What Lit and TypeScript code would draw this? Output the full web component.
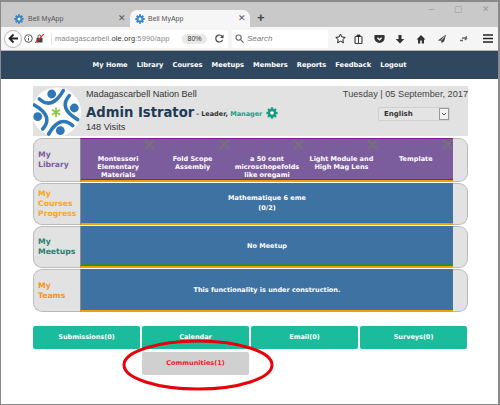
import { LitElement, html, css, svg } from "lit";
import { customElement } from "lit/decorators.js";

const gear = (c: string, s: number) => svg`<svg class="ic" width=${s} height=${s} viewBox="0 0 16 16"><g fill=${c}><circle cx="8" cy="8" r="5.4"/><rect x="6.4" y="0.5" width="3.2" height="15" /><rect x="0.5" y="6.4" width="15" height="3.2"/><rect x="6.4" y="0.5" width="3.2" height="15" transform="rotate(45 8 8)"/><rect x="6.4" y="0.5" width="3.2" height="15" transform="rotate(-45 8 8)"/></g><circle cx="8" cy="8" r="2.4" fill="#fff"/></svg>`;

const person = svg`<circle cx="-4.3" cy="-18.3" r="4.4" fill="#2f78b7"/><path d="M-16.7 -13.3Q-4 -2 7.3 -21.7" fill="none" stroke="#2f78b7" stroke-width="3.6" stroke-linecap="round"/>`;

@customElement("app-root")
export class AppRoot extends LitElement {
  static styles = css`
    :host { display: block; width: 500px; height: 405px; overflow: hidden; background: #fff; font-family: "Liberation Sans", Arial, sans-serif; position: relative; box-sizing: border-box; border: 1px solid #8a8a8a; border-width: 2px 2px 1px 1px; }
    .tabs { height: 25px; background: #c9c9c9; display: flex; align-items: flex-end; padding-left: 2px; }
    .tab { width: 127px; height: 17px; display: flex; align-items: center; gap: 4px; padding-left: 11px; box-sizing: border-box; font-size: 7px; color: #555; position: relative; }
    .tab span { display: flex; }
    .tab.on { background: #f6f6f6; border-radius: 7px 7px 0 0; width: 120px; padding-left: 5px; gap: 3px; }
    .tab .c { position: absolute; right: 4px; top: 3px; font-size: 9px; color: #555; line-height: 11px; }
    .plus { font-size: 13px; color: #444; margin: 0 0 2px 7px; line-height: 15px; font-weight: bold; }
    .winbtns { margin-left: auto; display: flex; align-self: flex-start; padding-top: 1px; margin-right: -1px; color: #9a9a9a; font-size: 9px; line-height: 12px; }
    .winbtns span { width: 27px; text-align: center; }
    .bar { height: 23px; background: #f5f5f5; border-bottom: 1px solid #b5b5b5; display: flex; align-items: center; padding-left: 3px; }
    .back { width: 18px; height: 18px; border-radius: 50%; border: 1px solid #bbb; background: #fff; display: flex; align-items: center; justify-content: center; box-sizing: border-box; flex: none; position: relative; z-index: 1; }
    .url { width: 207px; height: 18px; margin-left: -1px; background: #fff; display: flex; align-items: center; font-size: 7.5px; color: #888; padding-left: 3px; box-sizing: border-box; gap: 2px; flex: none; }
    .url b { font-weight: normal; color: #333; }
    .path { width: 122px; margin-left: 5px; padding-left: 3px; border-left: 1px solid #e4e4e4; white-space: nowrap; overflow: hidden; letter-spacing: .1px; line-height: 12px; }
    .zoom { background: #e8e8e8; border-radius: 6px; width: 25px; text-align: center; font-size: 7px; color: #333; line-height: 10px; margin-left: 3px; flex: none; }
    .rel { margin-left: 6px; }
    .search { width: 96px; height: 18px; margin-left: 4px; background: #fff; font-size: 8px; font-style: italic; color: #777; display: flex; align-items: center; gap: 3px; padding-left: 3px; box-sizing: border-box; flex: none; }
    .tools { display: flex; align-items: center; margin-left: 7px; }
    .tools svg { display: block; flex: none; }
    .tools svg:nth-child(2) { margin-left: 8px; }
    .tools svg:nth-child(3) { margin-left: 11px; }
    .tools svg:nth-child(4) { margin-left: 10px; }
    .tools svg:nth-child(5) { margin-left: 11px; }
    .tools svg:nth-child(6) { margin-left: 11px; }
    .tools svg:nth-child(7) { margin-left: 12px; }
    .tools svg:nth-child(8) { margin-left: 14px; }
    .nav { height: 28px; background: #2f4860; display: flex; justify-content: center; align-items: center; gap: 9px; font: bold 6.7px "DejaVu Sans", Verdana, sans-serif; color: #fff; }
    .page { padding: 7px 30px 0 32px; }
    .head { height: 50px; background: #e2e2e2; display: flex; position: relative; overflow: hidden; }
    .logo { width: 50px; height: 50px; flex: none; display: block; }
    .who { padding: 3px 0 0 3px; flex: 1; color: #333; font-size: 9.1px; line-height: 11px; }
    .nm { display: flex; align-items: center; gap: 2px; margin: 4px 0 1px; height: 17px; white-space: nowrap; }
    .nm strong { font: bold 13.2px "DejaVu Sans", Verdana, sans-serif; color: #1f3a56; }
    .nm span { font: bold 6.5px "DejaVu Sans", Verdana, sans-serif; color: #333; padding-top: 2px; }
    .nm em { font-style: normal; color: #17a085; }
    .nm svg { margin-left: 2px; }
    .right { display: flex; flex-direction: column; align-items: flex-end; padding-top: 3px; font-size: 9.2px; color: #444; line-height: 11px; }
    .sel { width: 72px; height: 14px; margin: 7px 18px 0 0; border: 1px solid #d0d0d0; border-radius: 2px; background: #e4e4e4; display: flex; justify-content: space-between; align-items: center; box-sizing: border-box; font: bold 7px "DejaVu Sans", sans-serif; color: #333; padding-left: 5px; }
    .sel i { width: 10px; height: 12px; background: #f2f2f2; border: 1px solid #999; box-sizing: border-box; display: flex; align-items: center; justify-content: center; }
    .rows { margin-top: 2px; display: flex; flex-direction: column; gap: 1px; }
    .row { display: flex; height: 42px; }
    .row.r1 { height: 44px; }
    .row.r4 { height: 43px; }
    .lab { width: 47px; flex: none; box-sizing: border-box; background: #e2e2e2; border: 1px solid #bbb; border-right: 0; border-radius: 9px 0 0 9px; padding-left: 4px; font: bold 7.7px/10px "DejaVu Sans", Verdana, sans-serif; display: flex; align-items: center; }
    .panel { flex: 1; min-width: 0; background: #3e72a2; border-left: 1px solid #8c8c8c; border-bottom: 2px solid #f2a000; display: flex; align-items: center; justify-content: center; text-align: center; color: #fff; font: bold 6.5px/10px "DejaVu Sans", Verdana, sans-serif; }
    .end { width: 15px; flex: none; box-sizing: border-box; background: #e2e2e2; border: 1px solid #bbb; border-left: 0; border-radius: 0 9px 9px 0; }
    .lib { background: #7b5d9d; border-top: 1px solid #8b1a8e; display: grid; grid-template-columns: repeat(5, minmax(0, 1fr)); align-items: start; box-sizing: border-box; position: relative; box-shadow: inset 0 -1px 0 #8b1a8e; padding-top: 16px; }
    .lib div { line-height: 8px; position: relative; }
    .x { position: absolute; left: 50%; top: -16px; margin-left: 26px; }
    .green { box-shadow: inset 0 -2px 0 #2d8a3e; }
    .btns { display: grid; grid-template-columns: repeat(4, 107px); gap: 3px 2px; margin-top: 14px; }
    .btn { height: 23px; background: #1abc9c; border-radius: 2px; color: #fff; display: flex; align-items: center; justify-content: center; padding-bottom: 2px; box-sizing: border-box; font: bold 6.5px "DejaVu Sans", Verdana, sans-serif; }
    .btn.g { background: #d0d0d0; color: #ee1c25; grid-column: 2; }
    .ring { position: absolute; left: 120px; top: 336px; display: block; }
  `;

  render() {
    const ic = () => html`<span>${gear("#3d86c6", 10)}</span>`;
    const row = (l: string, c: string, body: unknown, cls = "") =>
      html`<div class="row ${cls}"><div class="lab" style="color:${c}">${l}</div>${body}<div class="end"></div></div>`;
    return html`
      <div class="tabs">
        <div class="tab">${ic()}<span>Bell MyApp</span><span class="c">✕</span></div>
        <div class="tab on">${ic()}<span>Bell MyApp</span><span class="c">✕</span></div>
        <span class="plus">+</span>
        <div class="winbtns"><span>–</span><span>▢</span><span>✕</span></div>
      </div>
      <div class="bar">
        <div class="back"><svg width="11" height="11" viewBox="0 0 11 11"><path d="M10 5.5H2M5.5 1.5l-4 4 4 4" fill="none" stroke="#222" stroke-width="1.8"/></svg></div>
        <div class="url">
          <svg width="9" height="9" viewBox="0 0 9 9"><circle cx="4.5" cy="4.5" r="3.8" fill="none" stroke="#555"/><path d="M4.5 4v2.6M4.5 2.2v1" stroke="#555"/></svg>
          <svg width="9" height="9" viewBox="0 0 9 9"><rect x="1.5" y="4" width="6" height="4.5" fill="#444"/><path d="M3 4V2.5a1.5 1.5 0 013 0V4" fill="none" stroke="#444"/><path d="M0 9L9 0" stroke="#e22" stroke-width="1.2"/></svg>
          <span class="path">madagascarbell.<b>ole.org</b>:5990/app</span>
          <span class="zoom">80%</span>
          <svg class="rel" width="9" height="9" viewBox="0 0 9 9"><path d="M7.6 3.2A3.5 3.5 0 104.5 8a3.5 3.5 0 003.2-2.2" fill="none" stroke="#444" stroke-width="1.1"/><path d="M8.5 0.5v3.4H5z" fill="#444"/></svg>
        </div>
        <div class="search">
          <svg width="9" height="9" viewBox="0 0 9 9"><circle cx="3.6" cy="3.6" r="2.6" fill="none" stroke="#666" stroke-width="1.1"/><path d="M5.6 5.6l3 3" stroke="#666" stroke-width="1.2"/></svg>
          <span>Search</span>
        </div>
        <div class="tools">
          <svg width="11" height="11" viewBox="0 0 11 11"><path d="M5.5 1l1.4 3 3.3.4-2.4 2.2.6 3.2-2.9-1.6-2.9 1.6.6-3.2L.8 4.4 4.1 4z" fill="#fff" stroke="#222"/></svg>
          <svg width="9" height="10" viewBox="0 0 9 10"><rect x="1" y="2.5" width="7" height="7" rx="1" fill="none" stroke="#444" stroke-width="1.2"/><path d="M3 2.5V1h3v1.5M4.5 3v6" stroke="#444"/></svg>
          <svg width="11" height="10" viewBox="0 0 11 10"><path d="M1 1h9a.6.6 0 01.6.6V4a5 5 0 01-10.2 0V1.6A.6.6 0 011 1z" fill="#333"/><path d="M3.4 3.8l2.1 2 2.1-2" stroke="#fff" stroke-width="1.2" fill="none"/></svg>
          <svg width="10" height="10" viewBox="0 0 10 10"><path d="M3.5 1h3v4h2.800L5 9.5.7 5h2.800z" fill="#333"/></svg>
          <svg width="10" height="10" viewBox="0 0 10 10"><path d="M5 1L.5 5.5H2V9.5h2.200V6.600h1.600v2.900H8V5.500h1.500z" fill="#333"/></svg>
          <svg width="10" height="10" viewBox="0 0 10 10"><path d="M9 .5L.8 6.500l3 .3L5 9.500l1-2L7 8z" fill="#444"/><path d="M7.500 2.500L4 6.500" stroke="#f5f5f5" stroke-width=".8"/></svg>
          <svg width="10" height="10" viewBox="0 0 10 10"><path d="M1 6.500h3M3 4h3l2-1.500M6 6l2-2" stroke="#666" stroke-width="1.500" fill="none"/></svg>
          <svg width="10" height="9" viewBox="0 0 10 9"><path d="M0 1h10M0 4.500h10M0 8h10" stroke="#222" stroke-width="1.400"/></svg>
        </div>
      </div>
      <div class="nav"><span>My Home</span><span>Library</span><span>Courses</span><span>Meetups</span><span>Members</span><span>Reports</span><span>Feedback</span><span>Logout</span></div>
      <div class="page">
        <div class="head">
          <svg class="logo" viewBox="0 0 50 50">
            <circle cx="23.500" cy="26" r="24.500" fill="#fff"/>
            <g transform="translate(23 26.300)">
              <g>${person}</g><g transform="rotate(90)">${person}</g><g transform="rotate(180)">${person}</g><g transform="rotate(270)">${person}</g>
            </g>
            <g stroke="#8cc63f" stroke-width="1.600" transform="translate(-1 1.300)"><path d="M24 20v10M20 22.500l8 5M28 22.500l-8 5"/></g>
          </svg>
          <div class="who">
            <div>Madagascarbell Nation Bell</div>
            <div class="nm"><strong>Admin Istrator</strong><span>- Leader, <em>Manager</em></span>${gear("#17997f", 12)}</div>
            <div>148 Visits</div>
          </div>
          <div class="right">
            <div>Tuesday | 05 September, 2017</div>
            <div class="sel"><span>English</span><i><svg width="6" height="5" viewBox="0 0 6 5"><path d="M1 1l2 2 2-2" fill="none" stroke="#555"/></svg></i></div>
          </div>
        </div>
        <div class="rows">
          ${row("My Library", "#7b5d9d", html`<div class="panel lib">
              <div>${this.xm()}Montessori<br>Elementary<br>Materials</div>
              <div>${this.xm()}Fold Scope<br>Assembly</div>
              <div>${this.xm()}a 50 cent<br>microschopefolds<br>like oregami</div>
              <div>${this.xm()}Light Module and<br>High Mag Lens</div>
              <div>${this.xm()}Template</div>
            </div>`, "r1")}
          ${row("My Courses Progress", "#f5a81c", html`<div class="panel"><div>Mathematique 6 eme<br>(0/2)</div></div>`)}
          ${row("My Meetups", "#2a7f6e", html`<div class="panel green">No Meetup</div>`)}
          ${row("My Teams", "#f7941d", html`<div class="panel">This functionality is under construction.</div>`, "r4")}
        </div>
        <div class="btns">
          <div class="btn">Submissions(0)</div><div class="btn">Calendar</div><div class="btn">Email(0)</div><div class="btn">Surveys(0)</div>
          <div class="btn g">Communities(1)</div>
        </div>
      </div>
      <svg class="ring" width="154" height="54" viewBox="0 0 154 54"><ellipse cx="77" cy="27" rx="74" ry="24" fill="none" stroke="#e8000b" stroke-width="3"/></svg>
    `;
  }

  xm() {
    return html`<svg class="x" width="11" height="11" viewBox="0 0 11 11"><path d="M1 1l9 9M10 1l-9 9" stroke="#77707c" stroke-width="2.400"/></svg>`;
  }
}
